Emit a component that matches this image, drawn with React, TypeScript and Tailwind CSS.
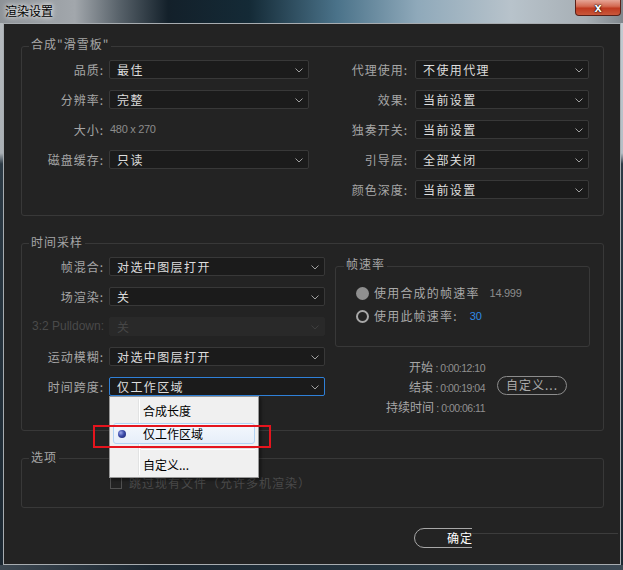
import React from "react";

const CJK = "font-['Noto_Sans_CJK_SC','Noto_Sans',sans-serif]";
const LAT = "font-['Liberation_Sans','Noto_Sans',sans-serif]";

function Chevron({ dim }: { dim?: boolean }) {
  return (
    <svg width="8" height="5" viewBox="0 0 8 5" className="absolute right-[5px] top-[7px]">
      <path d="M0.5 0.5 L4 4 L7.5 0.5" fill="none" stroke={dim ? "#3e3e3e" : "#a0a0a0"} strokeWidth="1" />
    </svg>
  );
}

function Select({
  className,
  children,
  focused,
  disabled,
  menu,
}: {
  className: string;
  children: React.ReactNode;
  focused?: boolean;
  disabled?: boolean;
  menu?: React.ReactNode;
}) {
  const tone = focused
    ? "border-[#2f80d8] bg-[#1b1b1b] text-[#dedede]"
    : disabled
    ? "border-[#292929] bg-[#292929] text-[#474747]"
    : "border-[#383838] bg-[#1b1b1b] text-[#dedede]";
  return (
    <div className={`relative flex h-[19px] items-center rounded-[2px] border pl-[7px] text-[12px] leading-[17px] tracking-[1.4px] ${tone} ${className}`}>
      {children}
      <Chevron dim={disabled} />
      {menu}
    </div>
  );
}

function Label({ className, children, dim }: { className: string; children: React.ReactNode; dim?: boolean }) {
  return (
    <span className={`text-right text-[12px] leading-[19px] tracking-[1px] ${dim ? "text-[#4a4a4a]" : "text-[#a6a6a6]"} ${className}`}>
      {children}
    </span>
  );
}

function GroupTitle({ children, className }: { children: React.ReactNode; className: string }) {
  return (
    <span className={`absolute bg-[#232323] px-[2px] text-[12px] leading-[16px] tracking-[1px] text-[#a6a6a6] ${className}`}>
      {children}
    </span>
  );
}

function Menu() {
  return (
    <div className="absolute -left-[1px] top-[18px] z-10 flex w-[150px] flex-col border border-[#979797] bg-[#f0f0f0] px-[3px] pb-[1px] pt-[3px] tracking-normal text-black shadow-[2px_2px_3px_rgba(0,0,0,0.45)]">
      <div className="absolute bottom-[2px] left-[28px] top-[2px] w-[2px] border-l border-r border-l-[#e2e3e3] border-r-white" />
      <div className="relative flex h-[22px] items-center pl-[30px] text-[12px] leading-none">合成长度</div>
      <div className="relative mt-[1px] flex h-[21px] items-center rounded-[3px] border border-[#b2d3f4] bg-[linear-gradient(180deg,#f4f8fd_0%,#e6eef9_100%)] pl-[29px] text-[12px] leading-none">
        <span className="absolute left-[4px] top-[6px] h-[8px] w-[8px] rounded-full bg-[radial-gradient(circle_at_35%_35%,#9aa6e8_0%,#3a4aa8_45%,#1a2366_100%)]" />
        仅工作区域
      </div>
      <div className="relative ml-[28px] mt-[4px] h-[2px] border-t border-b border-t-[#e0e0e0] border-b-white" />
      <div className="relative mt-[4px] flex h-[22px] items-center pl-[30px] text-[12px] leading-none">自定义...</div>
    </div>
  );
}

export default function App() {
  return (
    <div className={`relative flex h-[570px] w-[623px] flex-col overflow-hidden bg-[#1b2731] ${CJK}`}>
      {/* title bar */}
      <div className="flex h-[23px] items-start justify-between bg-[linear-gradient(90deg,#8d9297_0%,#a2a7ac_12%,#59636b_19%,#13202a_27%,#142a36_40%,#4a7289_54%,#8fa9ba_67%,#b8c3cb_82%,#a7afb5_94%,#80878d_100%)]">
        <div className="pl-[5px] pt-[3px] text-[12px] leading-[16px] text-black [text-shadow:0_0_4px_#fff,0_0_8px_rgba(255,255,255,0.8)]">
          渲染设置
        </div>
        <div className={`mr-[2px] flex h-[16px] w-[46px] items-center justify-center rounded-b-[4px] border border-t-0 border-[#5a2018] bg-[linear-gradient(180deg,#e6a596_0%,#d36a52_42%,#bf3a20_55%,#c9583b_100%)] text-[13px] font-bold leading-none text-white [text-shadow:0_0_2px_#000,0_0_1px_#000] ${LAT}`}>
          x
        </div>
      </div>

      {/* middle */}
      <div className="flex h-[542px]">
        <div className="w-[3px] bg-[linear-gradient(180deg,#b6bbbf_0%,#aab0b5_24%,#2c3a45_26%,#1b2731_100%)]" />
        <div className="w-[618px] border border-[#a7acb0] bg-[#232323] pl-[17px] pt-[22px]">
          {/* group 1 */}
          <div className="relative h-[170px] w-[583px] rounded-[3px] border border-[#383838]">
            <GroupTitle className="-top-[11px] left-[7px]">{'合成"滑雪板"'}</GroupTitle>
            <div className="flex pt-[13px]">
              <div className="flex w-[308px] flex-col gap-[11px]">
                <div className="flex h-[19px] items-center">
                  <Label className="w-[82px]">品质:</Label>
                  <Select className="ml-[5px] w-[200px]">最佳</Select>
                </div>
                <div className="flex h-[19px] items-center">
                  <Label className="w-[82px]">分辨率:</Label>
                  <Select className="ml-[5px] w-[200px]">完整</Select>
                </div>
                <div className="flex h-[19px] items-center">
                  <Label className="w-[82px]">大小:</Label>
                  <span className={`ml-[6px] text-[11px] tracking-[-0.3px] text-[#8c8c8c] ${LAT}`}>480 x 270</span>
                </div>
                <div className="flex h-[19px] items-center">
                  <Label className="w-[82px]">磁盘缓存:</Label>
                  <Select className="ml-[5px] w-[200px]">只读</Select>
                </div>
              </div>
              <div className="flex flex-col gap-[11px]">
                <div className="flex h-[19px] items-center">
                  <Label className="w-[78px]">代理使用:</Label>
                  <Select className="ml-[7px] w-[174px]">不使用代理</Select>
                </div>
                <div className="flex h-[19px] items-center">
                  <Label className="w-[78px]">效果:</Label>
                  <Select className="ml-[7px] w-[174px]">当前设置</Select>
                </div>
                <div className="flex h-[19px] items-center">
                  <Label className="w-[78px]">独奏开关:</Label>
                  <Select className="ml-[7px] w-[174px]">当前设置</Select>
                </div>
                <div className="flex h-[19px] items-center">
                  <Label className="w-[78px]">引导层:</Label>
                  <Select className="ml-[7px] w-[174px]">全部关闭</Select>
                </div>
                <div className="flex h-[19px] items-center">
                  <Label className="w-[78px]">颜色深度:</Label>
                  <Select className="ml-[7px] w-[174px]">当前设置</Select>
                </div>
              </div>
            </div>
          </div>

          {/* group 2 */}
          <div className="relative mt-[27px] h-[188px] w-[583px] rounded-[3px] border border-[#383838]">
            <GroupTitle className="-top-[10px] left-[7px]">时间采样</GroupTitle>
            <div className="flex pt-[13px]">
              <div className="flex w-[313px] flex-col gap-[11px]">
                <div className="flex h-[19px] items-center">
                  <Label className="w-[82px]">帧混合:</Label>
                  <Select className="ml-[5px] w-[216px]">对选中图层打开</Select>
                </div>
                <div className="flex h-[19px] items-center">
                  <Label className="w-[82px]">场渲染:</Label>
                  <Select className="ml-[5px] w-[216px]">关</Select>
                </div>
                <div className="flex h-[19px] items-center">
                  <Label className={`w-[82px] tracking-normal ${LAT}`} dim>
                    3:2 Pulldown:
                  </Label>
                  <Select className="ml-[5px] w-[216px]" disabled>
                    关
                  </Select>
                </div>
                <div className="flex h-[19px] items-center">
                  <Label className="w-[82px]">运动模糊:</Label>
                  <Select className="ml-[5px] w-[216px]">对选中图层打开</Select>
                </div>
                <div className="flex h-[19px] items-center">
                  <Label className="w-[82px]">时间跨度:</Label>
                  <Select className="ml-[5px] w-[216px]" focused menu={<Menu />}>
                    仅工作区域
                  </Select>
                </div>
              </div>
              <div className="mt-[9px] flex flex-col">
                <div className="relative h-[81px] w-[255px] rounded-[3px] border border-[#383838]">
                  <GroupTitle className="-top-[11px] left-[8px]">帧速率</GroupTitle>
                  <div className="flex flex-col gap-[5px] pl-[20px] pt-[17px]">
                    <div className="flex h-[18px] items-center">
                      <span className="h-[13px] w-[13px] rounded-full bg-[#8f8f8f]" />
                      <span className="ml-[5px] text-[12px] tracking-[1.2px] text-[#a9a9a9]">使用合成的帧速率</span>
                      <span className={`ml-[10px] text-[11px] tracking-[-0.3px] text-[#8c8c8c] ${LAT}`}>14.999</span>
                    </div>
                    <div className="flex h-[18px] items-center">
                      <span className="h-[13px] w-[13px] rounded-full border-2 border-[#a8a8a8]" />
                      <span className="ml-[5px] text-[12px] tracking-[1.2px] text-[#a9a9a9]">使用此帧速率:</span>
                      <span className={`ml-[12px] text-[11px] text-[#2f8ae8] ${LAT}`}>30</span>
                    </div>
                  </div>
                </div>
                <div className="mt-[8px] flex items-center">
                  <div className="flex w-[150px] flex-col items-end">
                    <div className="h-[20px] leading-[20px]">
                      <span className="text-[12px] text-[#a6a6a6]">开始</span>
                      <span className={`text-[10.5px] tracking-[-0.5px] text-[#909090] ${LAT}`}> : 0:00:12:10</span>
                    </div>
                    <div className="h-[20px] leading-[20px]">
                      <span className="text-[12px] text-[#a6a6a6]">结束</span>
                      <span className={`text-[10.5px] tracking-[-0.5px] text-[#909090] ${LAT}`}> : 0:00:19:04</span>
                    </div>
                    <div className="h-[20px] leading-[20px]">
                      <span className="text-[12px] text-[#a6a6a6]">持续时间</span>
                      <span className={`text-[10.5px] tracking-[-0.5px] text-[#909090] ${LAT}`}> : 0:00:06:11</span>
                    </div>
                  </div>
                  <div className="ml-[12px] flex h-[19px] w-[70px] items-center justify-center rounded-full border border-[#8c8c8c] text-[12px] tracking-[1px] text-[#ababab]">
                    自定义...
                  </div>
                </div>
              </div>
            </div>
          </div>

          {/* group 3 */}
          <div className="relative mt-[27px] h-[50px] w-[583px] rounded-[3px] border border-[#383838]">
            <GroupTitle className="-top-[10px] left-[7px]">选项</GroupTitle>
            <div className="flex items-center pl-[88px] pt-[17px]">
              <span className="h-[12px] w-[12px] border border-[#505050]" />
              <span className="ml-[7px] text-[12px] leading-[14px] tracking-[1px] text-[#4a4a4a]">跳过现有文件（允许多机渲染）</span>
            </div>
          </div>

          {/* bottom buttons */}
          <div className="ml-[393px] mt-[20px] flex items-start">
            <div className="h-[20px] w-[58px] overflow-hidden">
              <div className="flex h-[20px] w-[110px] items-center rounded-full border border-[#a8a8a8] pl-[32px] text-[12px] leading-none tracking-[1px] text-white">
                确定
              </div>
            </div>
            <div className="mt-[5px] h-px w-[146px] bg-[#3c3c3c]" />
          </div>
        </div>
        <div className="w-[2px] bg-[linear-gradient(180deg,#c3cbd1_0%,#b6bfc6_24%,#2c3a45_26%,#1b2731_100%)]" />
      </div>
      <div className="h-[5px] bg-[linear-gradient(90deg,#3d4852_0%,#1b2731_25%,#24343f_60%,#3c4954_100%)]" />

      {/* red annotation box */}
      <div className="absolute left-[93px] top-[425px] z-20 h-[23px] w-[178px] border-2 border-[#e5141d]" />
    </div>
  );
}
